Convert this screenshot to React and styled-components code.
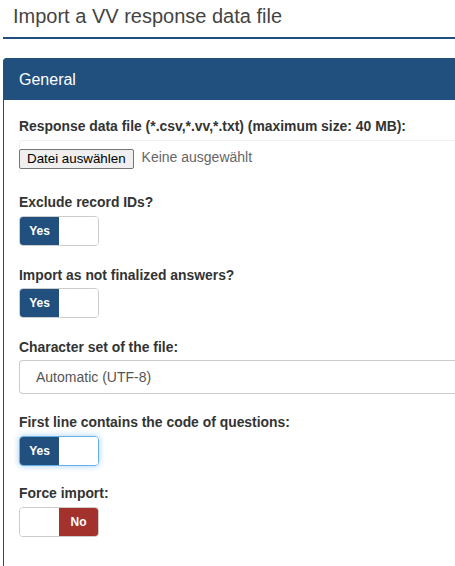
import React from 'react'
import styled, { createGlobalStyle, css } from 'styled-components'

const GlobalStyle = createGlobalStyle`
  html, body {
    margin: 0;
    padding: 0;
    overflow: hidden;
    background: #fff;
  }
  body {
    font-family: "Liberation Sans", Arial, Helvetica, sans-serif;
    color: #333;
  }
`

const Page = styled.div`
  width: 720px;
  padding-left: 3px;
`

const Heading = styled.h3`
  margin: 0;
  padding: 4px 0 9px 10px;
  font-size: 20px;
  line-height: 24px;
  font-weight: normal;
  color: #444;
  border-bottom: 2px solid #1f4e7b;
`

const Panel = styled.section`
  margin-top: 19px;
  border: 1px solid #1f4e7b;
  border-radius: 4px 4px 0 0;
`

const PanelHeader = styled.div`
  background: #214f7e;
  color: #fff;
  font-size: 16px;
  line-height: 20px;
  padding: 12px 16px 10px;
  margin: -1px -1px 0;
  border-radius: 4px 4px 0 0;
`

const PanelBody = styled.div`
  padding: 16px 15px 60px;
  background: #fff;
`

const Group = styled.div`
  margin-bottom: ${p => p.$gap ?? 19}px;
`

const Label = styled.label`
  display: block;
  font-size: 13.9px;
  line-height: 18px;
  padding-top: 1px;
  font-weight: bold;
  color: #333;
  margin-bottom: ${p => p.$gap ?? 5}px;
`

const FileBox = styled.div`
  display: flex;
  align-items: center;
  height: 33px;
  box-sizing: border-box;
  border: 1px solid #f0f0f0;
  border-right: none;
  border-bottom: none;
  border-radius: 4px 0 0 0;
  font-size: 14px;
  color: #666;
`

const FileButton = styled.span`
  display: inline-block;
  margin-left: -1px;
  margin-top: 3px;
  padding: 1px 7px;
  line-height: 16px;
  font-size: 13.33px;
  background: #efefef;
  border: 1px solid #767676;
  border-radius: 2px;
  color: #000;
  margin-right: 8px;
`

const Select = styled.div`
  height: 34px;
  box-sizing: border-box;
  border: 1px solid #ccc;
  border-right: none;
  border-radius: 4px 0 0 4px;
  padding: 0 16px;
  font-size: 14px;
  line-height: 32px;
  color: #555;
`

const Toggle = styled.div`
  display: flex;
  width: 80px;
  height: 30px;
  box-sizing: border-box;
  border: 1px solid #ccc;
  border-radius: 4px;
  overflow: hidden;
  ${p => p.$focus && css`
    border-color: #66afe9;
    box-shadow: 0 0 6px rgba(102, 175, 233, 0.6);
  `}
`

const Half = styled.span`
  flex: 1;
  display: flex;
  align-items: center;
  justify-content: center;
  font-size: 12px;
  font-weight: bold;
  color: #fff;
  background: ${p => p.$color || '#fff'};
`

const Switch = ({ on, focus }) => (
  <Toggle $focus={focus}>
    {on ? (
      <>
        <Half $color='#214f7e'>Yes</Half>
        <Half />
      </>
    ) : (
      <>
        <Half />
        <Half $color='#a3322d'>No</Half>
      </>
    )}
  </Toggle>
)

export default function App () {
  return (
    <Page>
      <GlobalStyle />
      <Heading>Import a VV response data file</Heading>
      <Panel>
        <PanelHeader>General</PanelHeader>
        <PanelBody>
          <Group>
            <Label>Response data file (*.csv,*.vv,*.txt) (maximum size: 40 MB):</Label>
            <FileBox>
              <FileButton>Datei auswählen</FileButton>
              Keine ausgewählt
            </FileBox>
          </Group>
          <Group>
            <Label>Exclude record IDs?</Label>
            <Switch on />
          </Group>
          <Group>
            <Label $gap={4}>Import as not finalized answers?</Label>
            <Switch on />
          </Group>
          <Group $gap={18}>
            <Label $gap={4}>Character set of the file:</Label>
            <Select>Automatic (UTF-8)</Select>
          </Group>
          <Group $gap={17}>
            <Label>First line contains the code of questions:</Label>
            <Switch on focus />
          </Group>
          <Group>
            <Label>Force import:</Label>
            <Switch />
          </Group>
        </PanelBody>
      </Panel>
    </Page>
  )
}
